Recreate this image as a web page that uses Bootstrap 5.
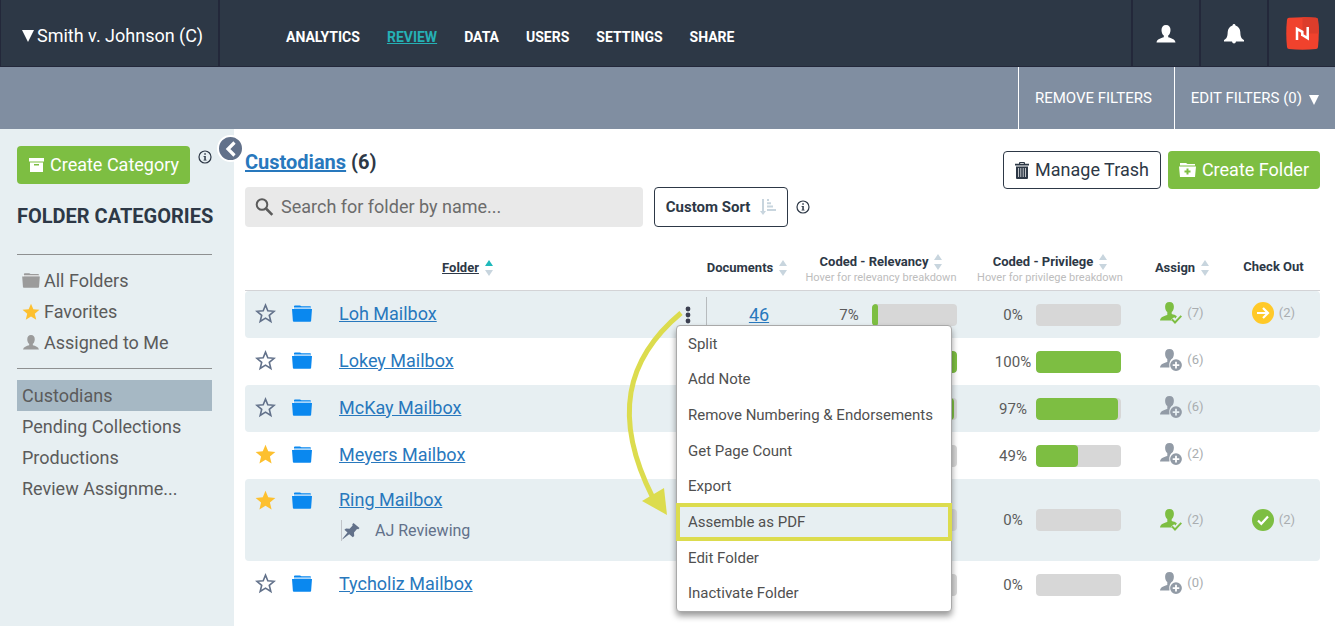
<!DOCTYPE html>
<html lang="en">
<head>
<meta charset="utf-8">
<meta name="viewport" content="width=device-width, initial-scale=1">
<title>Custodians – Smith v. Johnson (C)</title>
<link href="https://cdn.jsdelivr.net/npm/bootstrap@5.3.0/dist/css/bootstrap.min.css" rel="stylesheet">
<style>
  :root { --ink:#2d3846; --edge:#23283a; --mist:#e7eff2; --green:#7dbe42; --blue:#2878bd; --grey:#5b5b5b; --amber:#fdc02f; }
  body { font-family: Roboto, "Liberation Sans", sans-serif; font-size: 18px; line-height: 24px; color: var(--grey); background: #fff; }
  svg { display: block; flex: none; }
  a { color: inherit; }
  .topbar { background: var(--ink); border-bottom: 1px solid var(--edge); height: 67px; color: #fff; }
  .case-btn { width: 220px; padding: 6px 0 0 21px; gap: 3px; border: 0; border-left: 1px solid var(--edge); border-right: 2px solid var(--edge); background: none; color: #fff; }
  .main-nav { gap: 27px; margin-left: 66px; padding-top: 8px; font-size: 14px; font-weight: 700; }
  .main-nav a { text-decoration: none; }
  .main-nav a.current { color: #25b0b5; text-decoration: underline; }
  .top-cell { width: 68px; padding-top: 2px; border: 0; border-left: 2px solid var(--edge); background: none; color: #fff; }
  .filterbar { background: #808ea1; height: 62px; }
  .filterbar button { border: 0; border-left: 1px solid #fff; background: none; color: #fff; font-size: 15px; padding: 0 22px 0 16px; gap: 7px; }
  .filterbar button:last-child { padding-right: 16px; }
  .sidebar { width: 234px; background: var(--mist); padding: 17px 22px 17px 17px; }
  .page-body { min-height: calc(100vh - 129px); }
  .collapse-btn { top: 6px; right: -10px; width: 27px; height: 27px; border: 2px solid #fff; background: #62718a; color: #fff; }
  .btn-solid, .btn-line, .btn-sort { --bs-btn-font-size: 18px; --bs-btn-line-height: 24px; --bs-btn-border-radius: 4px; display: flex; align-items: center; white-space: nowrap; }
  .btn-solid { --bs-btn-color: #fff; --bs-btn-bg: var(--green); padding: 6px 10px; gap: 6px; }
  .btn-line, .btn-sort { --bs-btn-color: var(--ink); --bs-btn-border-color: var(--ink); --bs-btn-bg: #fff; padding: 6px 11px; gap: 6px; }
  .btn-sort { --bs-btn-font-size: 15px; --bs-btn-font-weight: 700; padding: 7px 11px; gap: 10px; margin-left: 11px; }
  .actions { top: 1px; right: 0; gap: 7px; }
  .info-btn { border: 0; background: none; padding: 0; color: var(--ink); }
  .side-title { font-size: 20px; font-weight: 700; color: var(--ink); margin: 20px 0 26px; white-space: nowrap; }
  .side-list { border-top: 1px solid #8e9091; padding: 10px 0; margin: 0; list-style: none; }
  .side-list + .side-list { padding-top: 11px; }
  .side-list a { height: 31px; padding: 0 5px; gap: 4px; text-decoration: none; }
  .side-list a.current { background: #a6b8c4; }
  .main { min-width: 0; padding: 21px 15px 12px 11px; }
  .page-title { font-size: 20px; font-weight: 700; color: var(--ink); margin: 0 0 13px; }
  .page-title a { color: var(--blue); }
  .search { width: 37%; background: #e9e9e9; border-radius: 4px; padding: 0 10px; gap: 7px; height: 40px; }
  .search input { border: 0; background: none; outline: 0; min-width: 0; padding: 0; color: var(--grey); }
  .search input::placeholder { color: #6c6c6c; opacity: 1; }
  .folders { width: 100%; table-layout: fixed; border-collapse: separate; border-spacing: 0; margin-top: 17px; }
  .folders th { height: 47px; padding: 0; border-bottom: 1px solid #d3d3d6; text-align: center; font-size: 13px; line-height: 16px; color: var(--ink); white-space: nowrap; }
  .folders .hint { font-size: 11px; font-weight: 400; color: #bdbdbd; }
  .folders .sorter { gap: 6px; padding-top: 2px; }
  .folders .two-line { padding-top: 6px; }
  .folders td { height: 47px; padding: 0; vertical-align: middle; }
  .folders tbody tr:nth-child(odd) td { background: var(--mist); }
  .folders td.lead-cell { padding-bottom: 2px; }
  .folders td:first-child { border-radius: 4px 0 0 4px; padding-left: 10px; }
  .folders td:last-child { border-radius: 0 4px 4px 0; }
  .folders td a { color: var(--blue); }
  .folders th.docs { padding-right: 12px; }
  .folders td.docs { padding-left: 12px; }
  .folders .noted td { height: 82px; }
  .folders .noted td.lead-cell { vertical-align: top; padding-top: 9px; }
  .glyph { height: 24px; }
  .note { margin: 8px 0 0 2px; border-left: 1px solid #c1c4c8; height: 21px; gap: 15px; font-size: 16px; color: #62718a; }
  .kebab { border: 0; background: none; padding: 0; width: 28px; color: #3b3f50; }
  .rule { border-left: 1px solid #b7bbbe; height: 35px; }
  .meter { font-size: 15px; padding-right: 6px; }
  .meter.wide { padding-right: 16px; }
  .meter .pct { width: 46px; text-align: center; }
  .meter .progress { width: 85px; height: 22px; border-radius: 4px; background: #d7d7d7; }
  .meter .progress-bar { background: var(--green); border-radius: 4px; }
  .tally { gap: 5px; font-size: 13px; color: #a9adb0; padding-bottom: 3px; }
  .noted .tally { padding-bottom: 1px; }
  .row-menu { left: 2px; top: 28px; width: 276px; height: 287px; grid-auto-rows: 1fr; z-index: 5; background: #fff; border: 1px solid #a9a9a9; border-radius: 4px; box-shadow: 0 4px 6px rgba(0,0,0,.4); }
  .row-menu button { border: 0; background: none; padding: 0 0 0 11px; text-align: left; font-size: 15px; color: #505050; white-space: nowrap; }
  .row-menu button.picked { background: var(--mist); box-shadow: inset 0 0 0 3px #dcdc4e, 0 0 0 1px #dcdc4e; }
  .pointer { left: -56px; top: 10px; z-index: 6; pointer-events: none; }
</style>
</head>
<body>
<svg width="0" height="0" class="position-absolute" aria-hidden="true">
  <symbol id="person" viewBox="0 0 20 18"><path d="M10 0c3 0 4.500 2 4.500 5 0 2.600-1 4.600-2.300 5.600v1.600c3 .9 6.800 1.800 7.300 5.300H.5c.5-3.500 4.300-4.400 7.300-5.300v-1.600C6.500 9.600 5.500 7.600 5.500 5c0-3 1.500-5 4.500-5z"/></symbol>
  <symbol id="star" viewBox="0 0 20 20"><path d="M10 .8l2.600 6.200 6.800.6-5.200 4.400 1.600 6.600L10 15.100l-5.800 3.500L5.800 12 .6 7.600 7.400 7z"/></symbol>
  <symbol id="staro" viewBox="0 0 20 20"><path d="M10 2l2.200 5.400 6 .5-4.600 3.800 1.500 5.900L10 14.400l-5.100 3.200 1.500-5.900L1.800 7.900l6-.5z" fill="none" stroke="#62718a" stroke-width="1.500"/></symbol>
  <symbol id="folder" viewBox="0 0 20 17"><path d="M2 1.200Q2 .4 3 .4h5L9.500 1.200H18q1 0 1 1V4H2z"/><path d="M1 2.300h18V4H1z" fill="#fff" opacity=".65"/><path d="M0 4h20l-.9 12q0 .8-1 .8H1.900q-1 0-1-.8z"/></symbol>
  <symbol id="info" viewBox="0 0 14 14"><circle cx="7" cy="7" r="6" fill="none" stroke="currentColor" stroke-width="1.200"/><path d="M6.300 3.200h1.500v1.500H6.300zM5.500 5.900h2.300v3.900h.8v.8H5.500v-.8h.8V6.700h-.8z"/></symbol>
  <symbol id="sort" viewBox="0 0 8 16"><path d="M4 0l4 6H0zM0 10h8l-4 6z"/></symbol>
  <symbol id="assigned" viewBox="0 0 22 22"><path d="M9.500 0c3 0 4.400 2 4.400 4.700 0 2.500-1 4.300-2.200 5.300v2c2 .6 3.800 1 5.200 2.200l-1.400 2.300-1.300-1.300-3 2.400.8.800H0c.4-3.600 4.500-4.500 7.300-5.400v-3C6 9 5.100 7.200 5.100 4.700 5.100 2 6.500 0 9.500 0z"/><path d="M12 17.300l3 3.200 6.300-6.600" fill="none" stroke="currentColor" stroke-width="1.900"/></symbol>
  <symbol id="unassigned" viewBox="0 0 22 22"><path d="M9.500 0c3 0 4.400 2 4.400 4.700 0 1.700-.4 3.100-1.100 4.200-2.600 1.500-4 4.800-3.400 8.600v.9H0c.4-3.600 4.500-4.500 7.300-5.400v-3C6 9 5.100 7.200 5.100 4.700 5.100 2 6.500 0 9.500 0z"/><path fill-rule="evenodd" d="M16 10.200a5.900 5.900 0 100 11.800 5.900 5.900 0 000-11.800zm-.9 2.600h1.800v2.400h2.400V17h-2.400v2.400h-1.800V17h-2.400v-1.800h2.400z"/></symbol>
</svg>

<header class="topbar d-flex align-items-stretch">
  <button class="case-btn d-flex align-items-center text-nowrap" type="button">
    <svg width="12" height="12" viewBox="0 0 12 12" fill="#fff"><path d="M0 0h12L6 12z"/></svg>Smith v. Johnson (C)
  </button>
  <nav class="main-nav d-flex align-items-center flex-grow-1" aria-label="Main">
    <a href="#">ANALYTICS</a><a href="#" class="current">REVIEW</a><a href="#">DATA</a><a href="#">USERS</a><a href="#">SETTINGS</a><a href="#">SHARE</a>
  </nav>
  <button class="top-cell d-flex align-items-center justify-content-center" type="button" aria-label="Account"><svg width="20" height="18" fill="#fff"><use href="#person"/></svg></button>
  <button class="top-cell d-flex align-items-center justify-content-center" type="button" aria-label="Notifications"><svg width="20" height="20" viewBox="0 0 20 20" fill="#fff"><path d="M10 0q1.300 0 1.500 1.400Q16 3 16.300 8c.2 5 1 6.500 3.700 8v1.500h-8q-.3 2-2 2t-2-2H0V16c2.700-1.500 3.500-3 3.700-8Q4 3 8.500 1.400 8.700 0 10 0z"/></svg></button>
  <button class="top-cell d-flex align-items-center justify-content-center" type="button" aria-label="Home"><svg width="33" height="33" viewBox="0 0 33 33"><path d="M3 .8Q16.500-.5 30 .8q1.700.2 2 2Q33.500 16.500 32 30q-.2 1.800-2 2-13.500 1.300-27 0-1.800-.2-2-2Q-.5 16.500 1 2.800 1.200 1 3 .8z" fill="#f0422d"/><path d="M16.500 0Q24 0 30 .8q1.700.2 2 2Q33 10 32.800 16.500H16.500z" fill="#dc3d2b"/><path d="M11 23V11.800l5.300 3v4.200M21.700 10v11.200L16.400 18" fill="none" stroke="#fff" stroke-width="2.500"/></svg></button>
</header>

<div class="filterbar d-flex justify-content-end align-items-stretch">
  <button type="button">REMOVE FILTERS</button>
  <button type="button" class="d-flex align-items-center">EDIT FILTERS (0)<svg class="mt-1" width="10" height="10" viewBox="0 0 10 10" fill="#fff"><path d="M0 0h10L5 10z"/></svg></button>
</div>

<div class="page-body d-flex align-items-stretch">
  <aside class="sidebar position-relative flex-shrink-0">
    <button class="collapse-btn position-absolute rounded-circle d-flex align-items-center justify-content-center p-0" type="button" aria-label="Collapse sidebar"><svg width="12" height="16" viewBox="0 0 12 16"><path d="M9.500 1.500L3 8l6.500 6.500" fill="none" stroke="#fff" stroke-width="3.200"/></svg></button>
    <div class="d-flex align-items-start gap-2">
      <button class="btn btn-solid" type="button"><svg width="16" height="14" viewBox="0 0 16 14" fill="#fff"><path fill-rule="evenodd" d="M1 0h15v3.500H1zM2 4.500h13V14H2zm4 1.500v1.500h5V6z"/></svg>Create Category</button>
      <button class="info-btn mt-1" type="button" aria-label="About categories"><svg width="14" height="14" fill="currentColor"><use href="#info"/></svg></button>
    </div>
    <h2 class="side-title">FOLDER CATEGORIES</h2>
    <ul class="side-list">
      <li><a href="#" class="d-flex align-items-center"><svg width="18" height="15" fill="#9b9b9b"><use href="#folder"/></svg>All Folders</a></li>
      <li><a href="#" class="d-flex align-items-center"><svg width="18" height="18" fill="#fdc02f"><use href="#star"/></svg>Favorites</a></li>
      <li><a href="#" class="d-flex align-items-center"><svg width="18" height="15" fill="#9b9b9b"><use href="#person"/></svg>Assigned to Me</a></li>
    </ul>
    <ul class="side-list">
      <li><a href="#" class="current d-flex align-items-center">Custodians</a></li>
      <li><a href="#" class="d-flex align-items-center">Pending Collections</a></li>
      <li><a href="#" class="d-flex align-items-center">Productions</a></li>
      <li><a href="#" class="d-flex align-items-center">Review Assignme...</a></li>
    </ul>
  </aside>

  <main class="main flex-grow-1">
    <div class="position-relative">
      <h1 class="page-title"><a href="#">Custodians</a> (6)</h1>
      <div class="d-flex align-items-center">
        <label class="search d-flex align-items-center"><svg width="19" height="19" viewBox="0 0 19 19" fill="none" stroke="#5b5b5b"><circle cx="7" cy="6.500" r="5.300" stroke-width="2"/><path d="M11 10.500l6.300 6.300" stroke-width="2.600"/></svg><input class="flex-grow-1" type="text" placeholder="Search for folder by name..." aria-label="Search for folder by name"></label>
        <button class="btn btn-sort" type="button">Custom Sort<svg width="16" height="16" viewBox="0 0 16 16" fill="#c8d5de"><path d="M2 0h2v12h2l-3 4-3-4h2zM7 0h2v2H7zM7 3.300h4v2H7zM7 6.600h6v2H7zM7 10h9v2H7z"/></svg></button>
        <button class="info-btn ms-2" type="button" aria-label="About custom sort"><svg width="14" height="14" fill="currentColor"><use href="#info"/></svg></button>
      </div>
      <div class="actions position-absolute d-flex">
        <button class="btn btn-line" type="button"><svg width="14" height="17" viewBox="0 0 14 17" fill="#2d3846"><path fill-rule="evenodd" d="M0 3.500V1.800h4V1q0-1 1-1h4q1 0 1 1v.8h4v1.700zM5.200 1v.8h3.600V1zM1 4.500h12V16q0 1-1 1H2q-1 0-1-1zM3.200 6v9h.7V6zm2.300 0v9h.7V6zm2.300 0v9h.7V6zm2.300 0v9h.7V6z"/></svg>Manage Trash</button>
        <button class="btn btn-solid" type="button"><svg width="17" height="14" viewBox="0 0 17 14" fill="#fff"><path fill-rule="evenodd" d="M1 0h6l1.500 1H16v1.500H1zM0 3.500h17L16 14H1zM7.500 5.500v2h-2v2h2v2h2v-2h2v-2h-2v-2z"/></svg>Create Folder</button>
      </div>
    </div>

    <table class="folders">
      <colgroup><col style="width:47px"><col style="width:47px"><col><col style="width:33px"><col style="width:92px"><col style="width:164px"><col style="width:174px"><col style="width:90px"><col style="width:93px"></colgroup>
      <thead>
        <tr>
          <th colspan="3"><div class="sorter d-flex align-items-center justify-content-center ps-3"><a href="#">Folder</a><svg width="8" height="16" viewBox="0 0 8 16"><path d="M4 0l4 6H0z" fill="#1fb9bb"/><path d="M0 10h8l-4 6z" fill="#c8d5de"/></svg></div></th>
          <th></th>
          <th class="docs"><div class="sorter d-flex align-items-center justify-content-center">Documents<svg width="8" height="16" fill="#c8d5de"><use href="#sort"/></svg></div></th>
          <th><div class="sorter two-line d-flex align-items-center justify-content-center">Coded - Relevancy<svg width="8" height="16" fill="#c8d5de"><use href="#sort"/></svg></div><div class="hint">Hover for relevancy breakdown</div></th>
          <th><div class="sorter two-line d-flex align-items-center justify-content-center">Coded - Privilege<svg width="8" height="16" fill="#c8d5de"><use href="#sort"/></svg></div><div class="hint">Hover for privilege breakdown</div></th>
          <th><div class="sorter d-flex align-items-center justify-content-center">Assign<svg width="8" height="16" fill="#c8d5de"><use href="#sort"/></svg></div></th>
          <th>Check Out</th>
        </tr>
      </thead>
      <tbody>
        <tr>
          <td class="lead-cell"><div class="glyph d-flex align-items-center"><svg width="21" height="21"><use href="#staro"/></svg></div></td>
          <td class="lead-cell"><div class="glyph d-flex align-items-center"><svg width="20" height="17" fill="#0a88ef"><use href="#folder"/></svg></div></td>
          <td class="lead-cell"><a href="#">Loh Mailbox</a></td>
          <td><div class="position-relative d-flex align-items-center justify-content-end">
            <button class="kebab d-flex justify-content-center" type="button" aria-label="Folder actions" aria-expanded="true"><svg width="6" height="18" viewBox="0 0 6 18" fill="currentColor"><circle cx="3" cy="3" r="2.400"/><circle cx="3" cy="9" r="2.400"/><circle cx="3" cy="15" r="2.400"/></svg></button><div class="rule ms-1"></div>
            <div class="row-menu d-grid position-absolute" role="menu">
              <button type="button" role="menuitem">Split</button>
              <button type="button" role="menuitem">Add Note</button>
              <button type="button" role="menuitem">Remove Numbering &amp; Endorsements</button>
              <button type="button" role="menuitem">Get Page Count</button>
              <button type="button" role="menuitem">Export</button>
              <button type="button" role="menuitem" class="picked">Assemble as PDF</button>
              <button type="button" role="menuitem">Edit Folder</button>
              <button type="button" role="menuitem">Inactivate Folder</button>
            </div>
            <svg class="pointer position-absolute" width="70" height="212" viewBox="0 0 70 212"><path d="M63 6C8 52-6 110 35 191" fill="none" stroke="#dcdc4e" stroke-width="5"/><path d="M24 194l22-13 3 27z" fill="#dcdc4e"/></svg>
          </div></td>
          <td class="docs text-center"><a href="#">46</a></td>
          <td><div class="meter d-flex align-items-center justify-content-end"><span class="pct">7%</span><div class="progress"><div class="progress-bar" style="width:7%"></div></div></div></td>
          <td><div class="meter wide d-flex align-items-center justify-content-end"><span class="pct">0%</span><div class="progress"><div class="progress-bar" style="width:0%"></div></div></div></td>
          <td><div class="tally d-flex align-items-center justify-content-center"><svg width="22" height="22" fill="#7dbe42" color="#7dbe42"><use href="#assigned"/></svg>(7)</div></td>
          <td><div class="tally d-flex align-items-center justify-content-center"><svg width="22" height="22" viewBox="0 0 22 22"><circle cx="11" cy="11" r="11" fill="#ffc928"/><path d="M5 11h10M11 6l5 5-5 5" fill="none" stroke="#fff" stroke-width="2.200"/></svg>(2)</div></td>
        </tr>
        <tr>
          <td class="lead-cell"><div class="glyph d-flex align-items-center"><svg width="21" height="21"><use href="#staro"/></svg></div></td>
          <td class="lead-cell"><div class="glyph d-flex align-items-center"><svg width="20" height="17" fill="#0a88ef"><use href="#folder"/></svg></div></td>
          <td class="lead-cell"><a href="#">Lokey Mailbox</a></td>
          <td></td><td></td>
          <td><div class="meter d-flex align-items-center justify-content-end"><div class="progress"><div class="progress-bar" style="width:100%"></div></div></div></td>
          <td><div class="meter wide d-flex align-items-center justify-content-end"><span class="pct">100%</span><div class="progress"><div class="progress-bar" style="width:100%"></div></div></div></td>
          <td><div class="tally d-flex align-items-center justify-content-center"><svg width="22" height="22" fill="#929ba6"><use href="#unassigned"/></svg>(6)</div></td>
          <td></td>
        </tr>
        <tr>
          <td class="lead-cell"><div class="glyph d-flex align-items-center"><svg width="21" height="21"><use href="#staro"/></svg></div></td>
          <td class="lead-cell"><div class="glyph d-flex align-items-center"><svg width="20" height="17" fill="#0a88ef"><use href="#folder"/></svg></div></td>
          <td class="lead-cell"><a href="#">McKay Mailbox</a></td>
          <td></td><td></td>
          <td><div class="meter d-flex align-items-center justify-content-end"><div class="progress"><div class="progress-bar" style="width:97%"></div></div></div></td>
          <td><div class="meter wide d-flex align-items-center justify-content-end"><span class="pct">97%</span><div class="progress"><div class="progress-bar" style="width:97%"></div></div></div></td>
          <td><div class="tally d-flex align-items-center justify-content-center"><svg width="22" height="22" fill="#929ba6"><use href="#unassigned"/></svg>(6)</div></td>
          <td></td>
        </tr>
        <tr>
          <td class="lead-cell"><div class="glyph d-flex align-items-center"><svg width="21" height="21" fill="#fdc02f"><use href="#star"/></svg></div></td>
          <td class="lead-cell"><div class="glyph d-flex align-items-center"><svg width="20" height="17" fill="#0a88ef"><use href="#folder"/></svg></div></td>
          <td class="lead-cell"><a href="#">Meyers Mailbox</a></td>
          <td></td><td></td>
          <td><div class="meter d-flex align-items-center justify-content-end"><div class="progress"></div></div></td>
          <td><div class="meter wide d-flex align-items-center justify-content-end"><span class="pct">49%</span><div class="progress"><div class="progress-bar" style="width:49%"></div></div></div></td>
          <td><div class="tally d-flex align-items-center justify-content-center"><svg width="22" height="22" fill="#929ba6"><use href="#unassigned"/></svg>(2)</div></td>
          <td></td>
        </tr>
        <tr class="noted">
          <td class="lead-cell"><div class="glyph d-flex align-items-center"><svg width="21" height="21" fill="#fdc02f"><use href="#star"/></svg></div></td>
          <td class="lead-cell"><div class="glyph d-flex align-items-center"><svg width="20" height="17" fill="#0a88ef"><use href="#folder"/></svg></div></td>
          <td class="lead-cell"><a href="#">Ring Mailbox</a>
            <div class="note d-flex align-items-center"><svg width="18" height="18" viewBox="0 0 18 18" fill="#62718a"><path d="M11.500 1l6 5-1.200 1.300-1.300-.3-3 3.500.2 3.500-1.400 1.200-3.600-3L1 17l-.8.500L1 16l4.500-5.500L2.400 7.800 4 6.500l3.600.3 3-3.300-.3-1.300z"/></svg>AJ Reviewing</div></td>
          <td></td><td></td>
          <td><div class="meter d-flex align-items-center justify-content-end"><div class="progress"></div></div></td>
          <td><div class="meter wide d-flex align-items-center justify-content-end"><span class="pct">0%</span><div class="progress"><div class="progress-bar" style="width:0%"></div></div></div></td>
          <td><div class="tally d-flex align-items-center justify-content-center"><svg width="22" height="22" fill="#7dbe42" color="#7dbe42"><use href="#assigned"/></svg>(2)</div></td>
          <td><div class="tally d-flex align-items-center justify-content-center"><svg width="22" height="22" viewBox="0 0 22 22"><circle cx="11" cy="11" r="11" fill="#7dbe42"/><path d="M6 11.500l3.300 3.300L16 7.500" fill="none" stroke="#fff" stroke-width="2.200"/></svg>(2)</div></td>
        </tr>
        <tr>
          <td class="lead-cell"><div class="glyph d-flex align-items-center"><svg width="21" height="21"><use href="#staro"/></svg></div></td>
          <td class="lead-cell"><div class="glyph d-flex align-items-center"><svg width="20" height="17" fill="#0a88ef"><use href="#folder"/></svg></div></td>
          <td class="lead-cell"><a href="#">Tycholiz Mailbox</a></td>
          <td></td><td></td>
          <td><div class="meter d-flex align-items-center justify-content-end"><div class="progress"></div></div></td>
          <td><div class="meter wide d-flex align-items-center justify-content-end"><span class="pct">0%</span><div class="progress"><div class="progress-bar" style="width:0%"></div></div></div></td>
          <td><div class="tally d-flex align-items-center justify-content-center"><svg width="22" height="22" fill="#929ba6"><use href="#unassigned"/></svg>(0)</div></td>
          <td></td>
        </tr>
      </tbody>
    </table>
  </main>
</div>
<script src="https://cdn.jsdelivr.net/npm/bootstrap@5.3.0/dist/js/bootstrap.bundle.min.js"></script>
</body>
</html>
